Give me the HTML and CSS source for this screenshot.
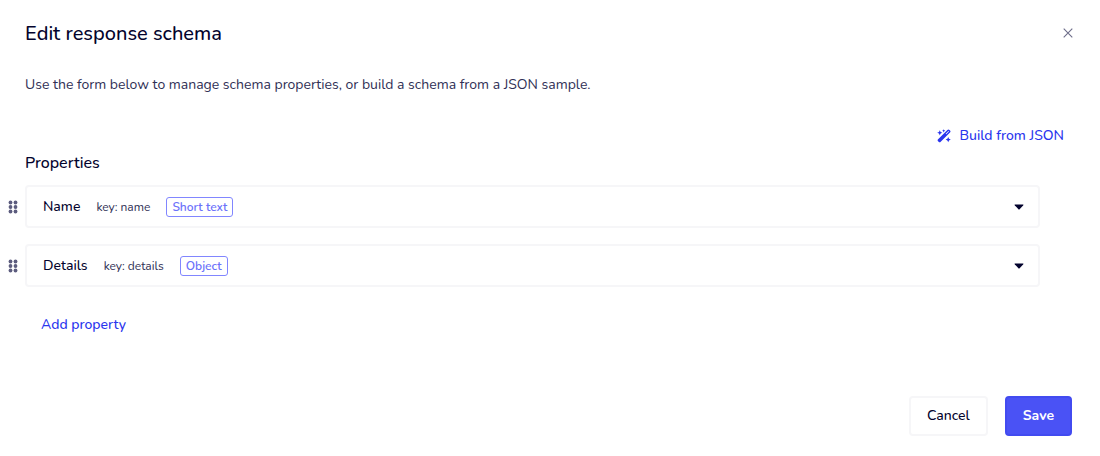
FILE: index.html
```html
<!DOCTYPE html>
<html lang="en">
<head>
    <meta charset="UTF-8">
    <meta name="viewport" content="width=device-width, initial-scale=1.0">
    <title>Edit response schema</title>
    <link rel="stylesheet" href="styles.css">
</head>
<body>

    <main class="modal">
        <header class="modal-header">
            <h1>Edit response schema</h1>
            <button type="button" class="close-btn" aria-label="Close">
                <svg width="10" height="10" viewBox="0 0 10 10" fill="none" stroke="currentColor" stroke-width="1.1">
                    <path d="M.7.7l8.600 8.600M9.300.7L.7 9.300"/>
                </svg>
            </button>
        </header>

        <p class="intro">Use the form below to manage schema properties, or build a schema from a JSON sample.</p>

        <div class="toolbar">
            <button type="button" class="link-btn">
                <svg width="14" height="14" viewBox="0 0 14 14" fill="currentColor">
                    <path fill-rule="evenodd" d="M10.4.9a1.500 1.500 0 0 1 2.100 0l.5.5a1.500 1.500 0 0 1 0 2.100L3.700 12.800a1.500 1.500 0 0 1-2.100 0l-.5-.5a1.500 1.500 0 0 1 0-2.100zM11.500 2L8.700 4.800l.5.5L12 2.500z"/>
                    <path d="M2.800 1.200l.8 1.800 1.800.8-1.800.8-.8 1.800L2 4.600.2 3.800 2 3zM11.200 8l.8 1.800 1.800.8-1.800.8-.8 1.800-.8-1.800-1.800-.8 1.800-.8zM6.700.2l.5 1.100 1.100.5-1.100.5-.5 1.100-.5-1.100-1.100-.5 1.100-.5z"/>
                </svg>
                Build from JSON
            </button>
        </div>

        <!-- Schema properties -->
        <section class="properties">
            <h2>Properties</h2>

            <div class="property">
                <button type="button" class="drag-handle" aria-label="Move Name">
                    <svg width="10" height="14" viewBox="0 0 10 14" fill="currentColor">
                        <circle cx="2.500" cy="2.500" r="1.900"/><circle cx="7.500" cy="2.500" r="1.900"/>
                        <circle cx="2.500" cy="7" r="1.900"/><circle cx="7.500" cy="7" r="1.900"/>
                        <circle cx="2.500" cy="11.500" r="1.900"/><circle cx="7.500" cy="11.500" r="1.900"/>
                    </svg>
                </button>
                <button type="button" class="property-card" aria-expanded="false">
                    <span class="property-name">Name</span>
                    <span class="property-key">key: name</span>
                    <span class="tag">Short text</span>
                    <svg class="caret" width="10" height="6" viewBox="0 0 10 6" fill="currentColor">
                        <path d="M1 .5h8q.8 0 .3.700L5.600 5.200q-.6.600-1.200 0L.7 1.200Q.2.500 1 .5z"/>
                    </svg>
                </button>
            </div>

            <div class="property">
                <button type="button" class="drag-handle" aria-label="Move Details">
                    <svg width="10" height="14" viewBox="0 0 10 14" fill="currentColor">
                        <circle cx="2.500" cy="2.500" r="1.900"/><circle cx="7.500" cy="2.500" r="1.900"/>
                        <circle cx="2.500" cy="7" r="1.900"/><circle cx="7.500" cy="7" r="1.900"/>
                        <circle cx="2.500" cy="11.500" r="1.900"/><circle cx="7.500" cy="11.500" r="1.900"/>
                    </svg>
                </button>
                <button type="button" class="property-card" aria-expanded="false">
                    <span class="property-name">Details</span>
                    <span class="property-key">key: details</span>
                    <span class="tag">Object</span>
                    <svg class="caret" width="10" height="6" viewBox="0 0 10 6" fill="currentColor">
                        <path d="M1 .5h8q.8 0 .3.700L5.600 5.200q-.6.600-1.200 0L.7 1.200Q.2.500 1 .5z"/>
                    </svg>
                </button>
            </div>

            <button type="button" class="link-btn add-btn">Add property</button>
        </section>

        <footer class="modal-footer">
            <button type="button" class="btn">Cancel</button>
            <button type="button" class="btn btn-primary">Save</button>
        </footer>
    </main>

</body>
</html>
```
FILE: styles.css
```css
* {
    box-sizing: border-box;
}

body {
    margin: 0;
    background-color: #fff;
    color: #03032d;
    font-family: Nunito, Lato, sans-serif;
    font-size: 14px;
    line-height: 20px;
}

button {
    padding: 0;
    border: none;
    background: none;
    color: inherit;
    font: inherit;
    cursor: pointer;
}

svg {
    display: block;
    flex: none;
}

h1, h2, p {
    margin: 0;
    font-weight: 500;
}

.modal {
    padding: 20px 28px 20px 25px;
}

.modal-header {
    display: flex;
    align-items: center;
    justify-content: space-between;
}

.modal-header h1 {
    font-size: 20px;
    line-height: 28px;
}

.close-btn {
    padding: 3px 4px 5px;
    margin-right: -5px;
    color: #6d6d89;
}

.intro {
    margin-top: 27px;
    color: #303055;
    font-weight: 400;
}

.toolbar {
    display: flex;
    justify-content: flex-end;
    margin-top: 31px;
    padding-right: 8px;
}

.link-btn {
    display: flex;
    align-items: center;
    gap: 8px;
    color: #2a35ee;
    font-weight: 500;
}

.properties {
    margin: 7px 32px 0 0;
}

.properties h2 {
    margin-bottom: 12px;
    font-size: 16px;
    line-height: 20px;
}

.property {
    display: flex;
    align-items: center;
    gap: 7px;
    margin: 0 0 16px -17px;
}

.drag-handle {
    color: #5c5c7e;
}

.property-card {
    display: flex;
    flex: 1;
    align-items: center;
    gap: 16px;
    padding: 10px 14px 9px 16px;
    border: 2px solid #f6f6f8;
    border-radius: 4px;
    text-align: left;
}

.property-name {
    font-weight: 500;
}

.property-key {
    color: #303055;
    font-size: 12px;
}

.tag {
    padding: 0 5px;
    border: 1px solid #8186ff;
    border-radius: 3px;
    color: #6c72fa;
    font-size: 12px;
    font-weight: 600;
    line-height: 18px;
}

.caret {
    margin-left: auto;
}

.add-btn {
    margin: 28px 0 0 16px;
}

.modal-footer {
    display: flex;
    justify-content: flex-end;
    gap: 17px;
    margin-top: 61px;
}

.btn {
    padding: 8px 16px;
    border: 2px solid #f6f6f8;
    border-radius: 4px;
    font-weight: 500;
}

.btn-primary {
    border-color: #424bf0;
    background-color: #4a52f5;
    color: #fff;
    font-weight: 700;
}
```
